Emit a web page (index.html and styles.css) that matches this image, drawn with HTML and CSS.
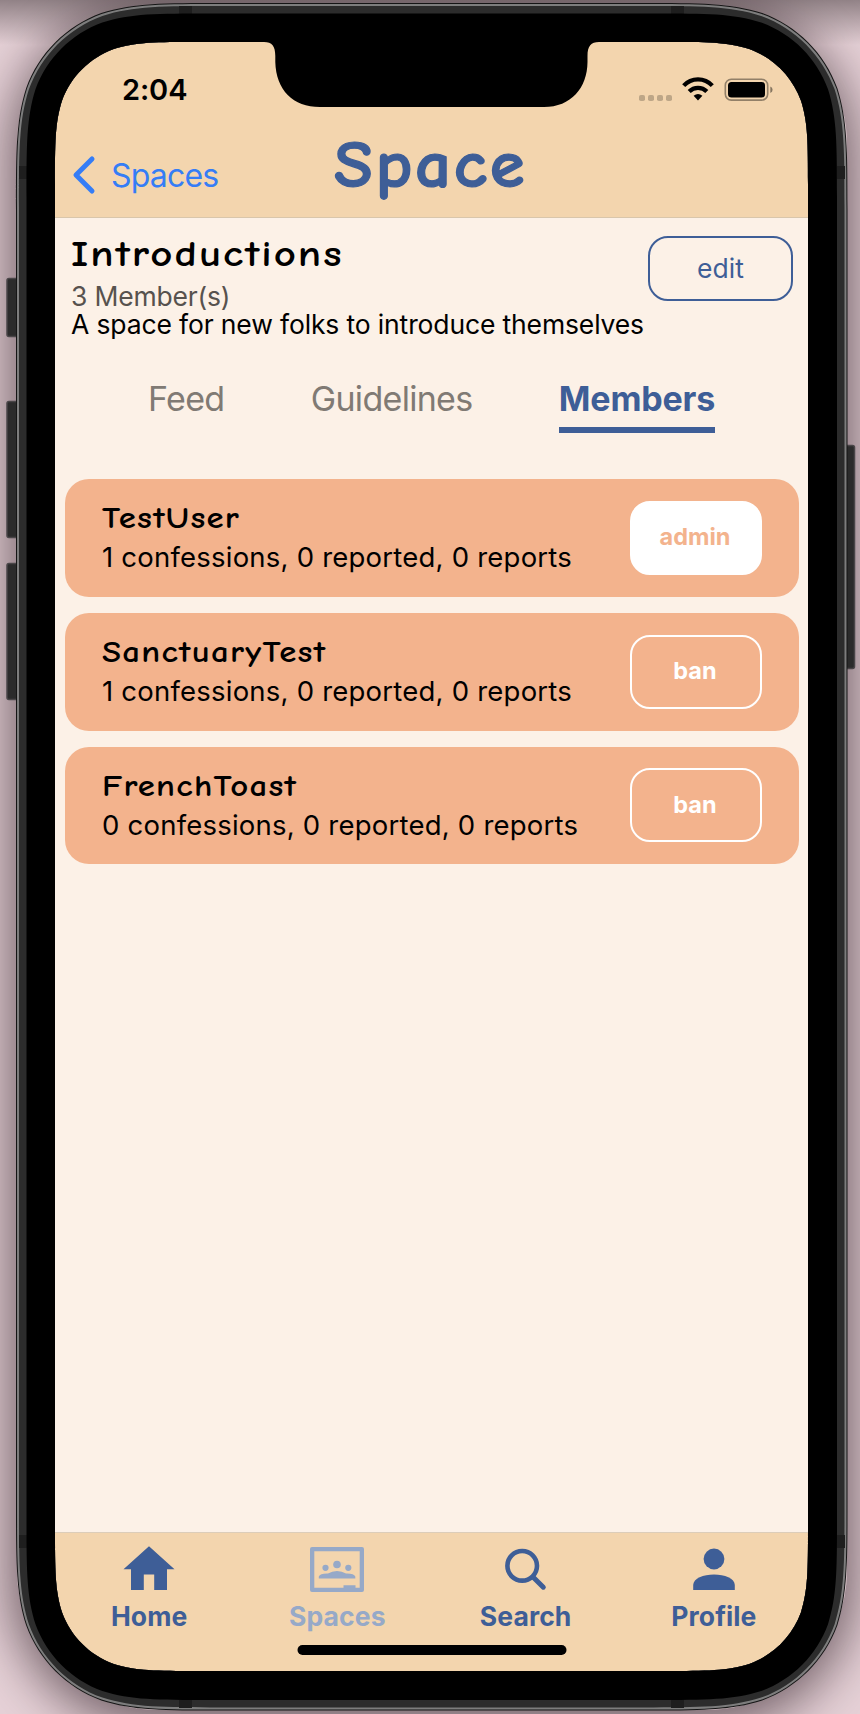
FILE: index.html
```html
<!DOCTYPE html>
<html lang="en">
<head>
<meta charset="utf-8">
<title>Space</title>
<link rel="stylesheet" href="styles.css">
</head>
<body>
<div class="shadow"></div>
<main class="screen">
  <header class="header">
    <div class="status">
      <span class="time">2:04</span>
      <svg class="status-icons" width="136" height="26" viewBox="0 0 136 26">
        <g fill="#000" fill-opacity=".22"><rect x="1" y="18" width="6" height="6" rx="1.8"/><rect x="10" y="18" width="6" height="6" rx="1.8"/><rect x="19" y="18" width="6" height="6" rx="1.8"/><rect x="28" y="18" width="6" height="6" rx="1.8"/></g>
        <g fill="none" stroke="#000" stroke-width="4.2"><path d="M45.700 8.600A19.500 19.500 0 0 1 74.300 8.600"/><path d="M51.200 14.500A12.300 12.300 0 0 1 68.800 14.500"/></g>
        <path d="M55.600 18.800Q60 15 64.400 18.800L60 23.400Z"/>
        <rect x="87.300" y="2.300" width="42.400" height="20.800" rx="6" fill="none" stroke="#000" stroke-opacity=".4" stroke-width="1.600"/>
        <rect x="90" y="5" width="37" height="15.500" rx="3.500"/>
        <path d="M132.300 9.500Q134.600 10.500 134.600 12.700T132.300 16Z" fill-opacity=".45"/>
      </svg>
    </div>
    <div class="nav">
      <a class="back"><svg width="24" height="40" viewBox="0 0 24 40"><path d="M20 4L4 20L20 36" fill="none" stroke="#357df6" stroke-width="5" stroke-linecap="round" stroke-linejoin="round"/></svg><span>Spaces</span></a>
      <h1 class="title">Space</h1>
    </div>
  </header>

  <section class="intro">
    <div class="intro-text">
      <h2>Introductions</h2>
      <p class="count">3 Member(s)</p>
      <p class="desc">A space for new folks to introduce themselves</p>
    </div>
    <button class="edit">edit</button>
  </section>

  <nav class="tabs">
    <a>Feed</a><a>Guidelines</a><a class="active">Members</a>
  </nav>

  <ul class="members">
    <li><div><h3>TestUser</h3><p>1 confessions, 0 reported, 0 reports</p></div><button class="admin">admin</button></li>
    <li><div><h3>SanctuaryTest</h3><p>1 confessions, 0 reported, 0 reports</p></div><button>ban</button></li>
    <li><div><h3>FrenchToast</h3><p>0 confessions, 0 reported, 0 reports</p></div><button>ban</button></li>
  </ul>

  <footer class="tabbar">
    <div class="items">
      <a><svg width="56" height="48" viewBox="0 0 56 48"><path d="M28 1.300L53.500 24.200H46V45H33.200V29.500H22.800V45H10V24.200H2.500Z"/></svg><span>Home</span></a>
      <a class="current"><svg width="56" height="48" viewBox="0 0 56 48"><path fill-rule="evenodd" d="M3 2H53Q55 2 55 4V45Q55 47 53 47H3Q1 47 1 45V4Q1 2 3 2ZM5.300 6.300V42.700H34.500V40.200H46.500V42.700H50.700V6.300Z"/><circle cx="28" cy="19.500" r="3.800"/><circle cx="16.500" cy="22.800" r="3.100"/><circle cx="39.300" cy="22.800" r="3.100"/><path d="M9.800 33.500V31.500Q11 28.300 19 28.500Q23 26 28 26T37 28.500Q45 28.300 46.300 31.500V33.500Z"/></svg><span>Spaces</span></a>
      <a><svg width="56" height="48" viewBox="0 0 56 48"><g fill="none" stroke="#3e5e97"><circle cx="24.200" cy="20.800" r="14.800" stroke-width="4.600"/><path d="M35 32L45.300 42.200" stroke-width="5" stroke-linecap="round"/></g></svg><span>Search</span></a>
      <a><svg width="56" height="48" viewBox="0 0 56 48"><circle cx="28" cy="14" r="10.400"/><path d="M7.200 45V40C7.200 33.500 17.500 29.500 28 29.500S48.800 33.500 48.800 40V45Z"/></svg><span>Profile</span></a>
    </div>
    <div class="indicator"></div>
  </footer>
</main>
<svg class="bezel" width="860" height="1714" viewBox="0 0 860 1714">
  <g fill="#2b2b2b" stroke="#4a4648" stroke-width="1.500">
    <rect x="7" y="278.500" width="13" height="58" rx="2"/><rect x="7" y="401.500" width="13" height="136" rx="2"/><rect x="7" y="563.500" width="13" height="136" rx="2"/><rect x="843" y="445.500" width="11.500" height="223" rx="2"/>
  </g>
  <path id="edge" fill="#151515" fill-rule="evenodd"/>
  <path id="rim" fill="#7d7d7d" fill-rule="evenodd"/>
  <path id="band" fill="#2c2c2c" fill-rule="evenodd"/>
  <g fill="#1e1e1e"><path d="M179 6h13v8h-13zM671 6h13v8h-13zM179 1700h13v8h-13zM671 1700h13v8h-13zM19 166h8v13h-8zM837 166h8v13h-8zM19 1535h8v13h-8zM837 1535h8v13h-8z"/></g>
  <path id="glass" fill="#000" fill-rule="evenodd"/>
  <path d="M262 41V42H264C272 42 275.300 46 275.300 56V62C276 90 293 107 320 107H544C571 107 587.300 88 587.500 62V56C587.500 46 591 42 599 42V41Z"/>
</svg>
<script src="frame.js"></script>
</body>
</html>
```
FILE: styles.css
```css
* { box-sizing: border-box; margin: 0; padding: 0; }
body { width: 860px; height: 1714px; overflow: hidden; background: linear-gradient(rgba(125, 111, 115, .8) 0, rgba(125, 111, 115, 0) 45px), #e6d1d7; padding: 42px 52px 43px 55px; font-family: Inter, "Liberation Sans", sans-serif; color: #000; position: relative; }
.shadow { position: absolute; left: 17px; top: 4px; width: 830px; height: 1706px; border-radius: 140px; box-shadow: 0 10px 50px 8px rgba(20, 5, 12, .55); }
.bezel { position: absolute; left: 0; top: 0; pointer-events: none; }
.screen { position: relative; width: 753px; height: 1629px; background: #fcf1e7; display: flex; flex-direction: column; }
h1, h2, h3 { font-family: "Comic Neue", "Comic Sans MS", cursive; font-weight: 700; white-space: nowrap; transform-origin: left center; }
p, span, a { white-space: nowrap; }
button { background: none; font-family: inherit; }

.header { height: 176px; background: #f3d5ae; border-bottom: 1px solid #d9c6ab; }
.status { height: 78px; padding: 34px 34px 0 67px; display: flex; justify-content: space-between; align-items: flex-start; }
.time { font-size: 29px; font-weight: 600; line-height: 28px; letter-spacing: -.1px; }
.status-icons { margin-top: 1px; }
.nav { height: 97px; display: grid; grid-template-columns: 1fr auto 1fr; }
.back { display: flex; align-items: center; gap: 15px; height: 40px; margin: 35px 0 0 17px; color: #357df6; font-size: 32px; letter-spacing: -.8px; }
.title { font-size: 67px; line-height: 91px; color: #3e5e97; letter-spacing: 2.500px; margin-left: -12px; transform: scaleX(1.06); -webkit-text-stroke: 1.200px #3e5e97; }

.intro { height: 142px; padding: 17px 15px 0 16px; display: flex; justify-content: space-between; }
.intro-text { width: 575px; flex: none; }
h2 { font-size: 37px; line-height: 38px; letter-spacing: 1.700px; transform: scaleX(1.16); }
.count { font-size: 26.500px; line-height: 28px; margin-top: 9px; color: #57524e; letter-spacing: -.2px; }
.desc { font-size: 26.500px; line-height: 28px; width: 575px; letter-spacing: -.14px; }
.edit { flex: none; width: 145px; height: 65px; margin: 1px 0 0 -4px; padding-bottom: 2px; border: 2px solid #3e5e97; border-radius: 20px; color: #3e5e97; font-size: 26.500px; }

.tabs { height: 119px; padding: 16px 93px 0 93px; display: flex; justify-content: space-between; font-size: 34px; line-height: 46px; color: #807a74; letter-spacing: -.7px; }
.tabs .active { color: #3e5e97; font-weight: 700; height: 57px; border-bottom: 6px solid #3e5e97; letter-spacing: -.2px; }

.members { list-style: none; flex: 1; padding: 0 9px 0 10px; display: flex; flex-direction: column; gap: 16px; }
.members li { height: 117.800px; flex: none; border-radius: 24px; background: #f3b38d; padding: 0 37px; display: flex; align-items: center; justify-content: space-between; }
h3 { font-size: 30px; line-height: 36px; letter-spacing: 1.100px; width: max-content; transform: translateY(2px) scaleX(1.16); }
.members p { font-size: 27.500px; line-height: 38px; letter-spacing: .22px; margin-top: 3px; }
.members button { width: 132px; height: 74px; padding: 0 2px 2px 0; border: 2px solid #fff; border-radius: 20px; color: #fff; font-size: 23.500px; font-weight: 700; }
.members .admin { background: #fff; color: #f3b38d; }

.tabbar { height: 139px; background: #f3d5ae; border-top: 1px solid #dccdb9; }
.items { display: grid; grid-template-columns: repeat(4, 1fr); height: 112px; padding-top: 12px; }
.items a { display: flex; flex-direction: column; align-items: center; color: #3e5e97; fill: #3e5e97; font-size: 26.500px; font-weight: 700; line-height: 36px; letter-spacing: .1px; gap: 5px; }
.items .current { color: #96a9c8; fill: #96a9c8; }
.indicator { width: 269px; height: 10px; border-radius: 5px; background: #000; margin: 0 auto; transform: translateX(.5px); }
```
FILE: frame.js
```js
// Continuous-corner rounded rectangle, as an SVG path
function squircle(x, y, w, h, r) {
  const k = [[1.528665, 0], [1.088493, 0], [0.868407, 0], [0.631494, 0.074911], [0.372824, 0.169059], [0.169059, 0.372824], [0.074911, 0.631494], [0, 0.868407], [0, 1.088493], [0, 1.528665]];
  const corner = (cx, cy, sx, sy, flip) => {
    const p = k.map(([a, b]) => (cx + sx * a * r).toFixed(2) + ' ' + (cy + sy * b * r).toFixed(2));
    if (flip) p.reverse();
    return p[0] + 'C' + p.slice(1, 4).join(' ') + 'C' + p.slice(4, 7).join(' ') + 'C' + p.slice(7).join(' ');
  };
  // Clockwise corners after the first need their own entry order
  return 'M' + corner(x, y, 1, 1) + 'L' + corner(x, y + h, 1, -1, true) + 'L' + corner(x + w, y + h, -1, -1) + 'L' + corner(x + w, y, -1, 1, true) + 'Z';
}
const rings = {
  edge: [16, 3, 831.5, 1707.5, 135],
  rim: [17, 4, 829.5, 1705.5, 134],
  band: [19, 6, 825.5, 1701.5, 132],
  glass: [26.5, 13.5, 810.5, 1686.5, 120]
};
const screenHole = squircle(55, 42, 753, 1629, 93);
for (const id in rings) document.getElementById(id).setAttribute('d', squircle(...rings[id]) + screenHole);
```
